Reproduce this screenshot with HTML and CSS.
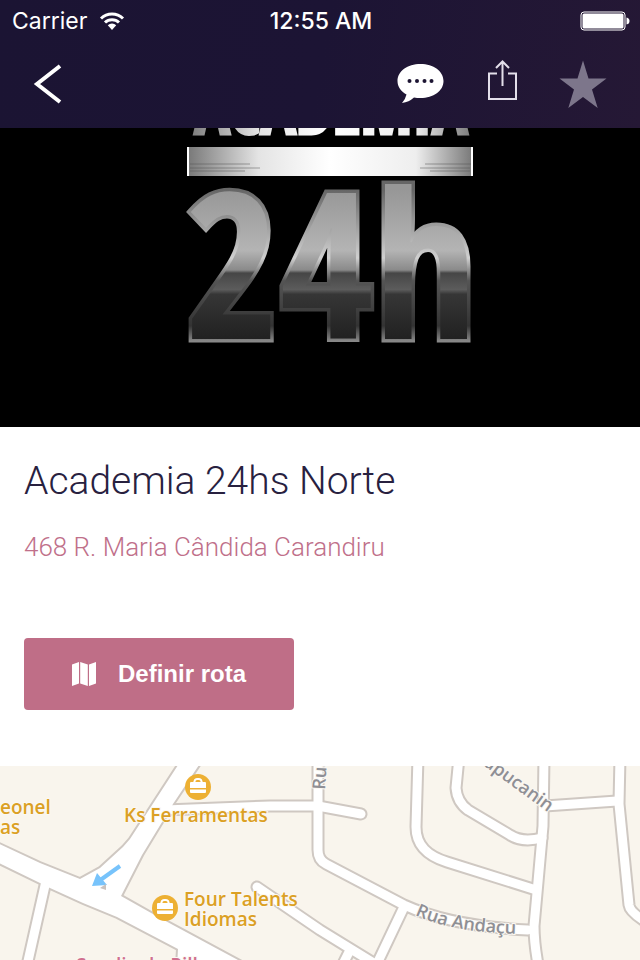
FILE: index.html
```
<!DOCTYPE html>
<html lang="pt-BR">
<head>
  <meta charset="UTF-8" />
  <meta name="viewport" content="width=device-width, initial-scale=1" />
  <title>Academia 24hs Norte</title>
  <link rel="stylesheet" href="styles.css">
</head>
<body>
  <header class="top">
    <!-- Status bar -->
    <div class="status-bar">
      <div class="carrier">
        <span>Carrier</span>
        <svg class="wifi" viewBox="0 0 26 20">
          <path d="M2 7.500A16 16 0 0 1 24 7.500" />
          <path d="M6 11.500A10 10 0 0 1 20 11.500" />
          <path class="wifi-dot" d="M8.800 14.300A6 6 0 0 1 17.200 14.300L13 19z" />
        </svg>
      </div>
      <time class="clock">12:55 AM</time>
      <svg class="battery" viewBox="0 0 50 20">
        <rect class="battery-frame" x="1" y="1" width="44" height="18" rx="3" />
        <rect x="2.500" y="2.500" width="41" height="15" rx="1.500" />
        <path d="M46.500 6.500q3 .5 3 3.500t-3 3.500z" />
      </svg>
    </div>

    <!-- Navigation -->
    <nav class="nav">
      <button class="icon-button back" aria-label="Voltar">
        <svg class="icon" viewBox="0 0 48 48">
          <path class="back-line" d="M36 6L13 24L36 42" />
        </svg>
      </button>
      <div class="actions">
        <button class="icon-button" aria-label="Comentários">
          <svg class="icon" viewBox="0 0 48 48">
            <path fill="#fff" d="M24.500 4C37.500 4 47.500 11 47.500 21S37.500 38 24.500 38Q21 38 18 37.500Q13 42 6 43Q9.500 39 10.500 34.500C4.500 31 1.500 26.500 1.500 21C1.500 11 11.500 4 24.500 4z" />
            <g fill="#1d1533">
              <circle cx="13.500" cy="21" r="2" />
              <circle cx="21" cy="21" r="2" />
              <circle cx="28.500" cy="21" r="2" />
              <circle cx="35.500" cy="21" r="2" />
            </g>
          </svg>
        </button>
        <button class="icon-button" aria-label="Compartilhar">
          <svg class="icon" viewBox="0 0 48 48">
            <path class="share-line" d="M20 13.500H12V39H39V13.500H31M25.500 26V2M19 8L25.500 1.500L32 8" />
          </svg>
        </button>
        <button class="icon-button" aria-label="Favoritar">
          <svg class="icon" viewBox="0 0 48 48">
            <path fill="#7d768b" d="M25 0.500L30.500 18.500H48.500L34 29.500L39.700 48L25 37L10.300 48L16 29.500L1.500 18.500H19.500z" />
          </svg>
        </button>
      </div>
    </nav>
  </header>

  <main>
    <div class="hero">
      <svg class="hero-logo" viewBox="0 0 640 299" role="img" aria-label="Academia 24h">
        <defs>
          <linearGradient id="metal" gradientUnits="userSpaceOnUse" x1="0" y1="62" x2="0" y2="213">
            <stop offset="0" stop-color="#979797" />
            <stop offset=".4" stop-color="#b4b4b4" />
            <stop offset=".53" stop-color="#8a8a8a" />
            <stop offset=".55" stop-color="#464646" />
            <stop offset=".66" stop-color="#5c5c5c" />
            <stop offset=".69" stop-color="#363636" />
            <stop offset="1" stop-color="#202020" />
          </linearGradient>
          <linearGradient id="edge" gradientUnits="userSpaceOnUse" x1="0" y1="62" x2="0" y2="213">
            <stop offset="0" stop-color="#666" />
            <stop offset=".45" stop-color="#d0d0d0" />
            <stop offset=".6" stop-color="#555" />
            <stop offset=".9" stop-color="#333" />
            <stop offset="1" stop-color="#888" />
          </linearGradient>
          <linearGradient id="chrome" gradientUnits="userSpaceOnUse" x1="187" y1="0" x2="473" y2="0">
            <stop offset="0" stop-color="#777" />
            <stop offset=".25" stop-color="#e4e4e4" />
            <stop offset=".5" stop-color="#fff" />
            <stop offset=".8" stop-color="#eee" />
            <stop offset="1" stop-color="#777" />
          </linearGradient>
        </defs>
        <text class="logo-name" x="331" y="6" fill="url(#chrome)" stroke="url(#chrome)">ACADEMIA</text>
        <rect x="187" y="19" width="286" height="29" fill="url(#chrome)" />
        <path stroke="#555" opacity=".5" d="M190 36h60M190 40h70M190 43h55M425 36h46M420 40h50M430 43h40" />
        <path stroke="#fff" stroke-width="2" d="M188 19v29M472 19v29" />
        <text class="logo-number" x="331" y="211" fill="url(#metal)" stroke="url(#edge)">24h</text>
      </svg>
    </div>

    <section class="info">
      <h1>Academia 24hs Norte</h1>
      <p class="address">468 R. Maria Cândida Carandiru</p>
      <button class="route-button">
        <svg class="map-icon" viewBox="0 0 24 24">
          <path d="M0 2.500L7 0V21.500L0 24zM8.200 0L15.800 2.500V24L8.200 21.500zM17 2.500L24 0V21.500L17 24z" />
        </svg>
        Definir rota
      </button>
    </section>

    <!-- Map -->
    <svg class="map" viewBox="0 0 640 194" role="img" aria-label="Mapa">
      <defs>
        <g id="roads">
          <path d="M46 115L26 204" />
          <path d="M165 44L270 40L318 40L361 48" />
          <path d="M318 -9V84Q318 94 326 98L404 139Q450 160 528 164" />
          <path d="M403 143L374 204" />
          <path d="M257 121L320 164L385 204M350 184L340 204" />
          <path d="M418 -9L416 61C416 80 428 90 447 96L533 123" />
          <path d="M459 -9L456 22Q457 36 468 44L510 69Q522 77 542 72" />
          <path d="M544 -9L543 60L537 127L534 160Q534 178 539 204" />
          <path d="M545 40L617 35" />
          <path d="M620 -9L619 38L629 139Q630 147 650 158" />
        </g>
        <path id="avenue" d="M-5 76L40 97L80 113L100 102L123 81L130 73L182 -7H203L173 38L142 89L121 130L160 152L251 201H177L178 183L117 151L83 137L50 122L40 117L-5 95z" />
        <g id="poi">
          <circle r="13" fill="#edb033" />
          <path fill="none" stroke="#fff" stroke-width="2" d="M-4 -4L-3 -7Q-2.500 -8 -1 -8H1Q2.500 -8 3 -7L4 -4" />
          <path fill="#fff" d="M-7 -5H7Q8 -5 8 -4V1H-8V-4Q-8 -5 -7 -5zM-8 2.500H8V5Q8 6 7 6H-7Q-8 6 -8 5z" />
        </g>
        <path id="street-andacu" d="M415 149Q455 168 530 168" />
        <path id="street-sapucaninha" d="M483 -1L560 55" />
      </defs>

      <use href="#roads" class="road-edge" />
      <use href="#avenue" class="avenue-edge" />
      <use href="#roads" class="road" />
      <use href="#avenue" class="avenue" />

      <path fill="none" stroke="#77c3fb" stroke-width="4" d="M120 100L99 115" />
      <path fill="#77c3fb" d="M92 120L97 107L107 119z" />
      <path fill="#c9c2be" d="M100 122L106 118V124z" />

      <text class="street" transform="translate(325 24) rotate(-86)">Rua</text>
      <text class="street"><textPath href="#street-andacu">Rua Andaçu</textPath></text>
      <text class="street"><textPath href="#street-sapucaninha">apucanin</textPath></text>

      <use href="#poi" x="198" y="21" />
      <use href="#poi" x="165" y="142" />
      <text class="place" x="0" y="48">eonel</text>
      <text class="place" x="0" y="68">as</text>
      <text class="place" x="124" y="56">Ks Ferramentas</text>
      <text class="place" x="184" y="140">Four Talents</text>
      <text class="place" x="184" y="160">Idiomas</text>
      <text class="place place-pink" x="76" y="206">Sandia de Pilk</text>
    </svg>
  </main>
</body>
</html>
```
FILE: styles.css
```
body {
  margin: 0;
  background: #fff;
  color: #28213f;
  font-family: Roboto, 'Liberation Sans', sans-serif;
}

.top {
  background: linear-gradient(100deg, #1b1433 0%, #1c1434 50%, #251835 100%);
  color: #fff;
}

.status-bar {
  display: grid;
  grid-template-columns: 1fr auto 1fr;
  align-items: center;
  height: 41px;
  padding: 0 10px 0 12px;
  font-family: Inter, sans-serif;
  font-size: 23px;
}

.carrier {
  display: flex;
  align-items: center;
  gap: 12px;
}

.clock {
  font-weight: 500;
}

.wifi {
  width: 26px;
  height: 20px;
  fill: none;
  stroke: #fff;
  stroke-width: 3;
}

.wifi .wifi-dot {
  fill: #fff;
  stroke: none;
}

.battery {
  justify-self: end;
  width: 50px;
  height: 20px;
  fill: #fff;
}

.battery-frame {
  fill: none;
  stroke: #fff;
}

.nav {
  display: flex;
  justify-content: space-between;
  align-items: flex-start;
  height: 87px;
  padding: 19px 34px 0 24px;
  box-sizing: border-box;
}

.actions {
  display: flex;
  gap: 33px;
}

.icon-button {
  padding: 0;
  border: none;
  background: none;
  cursor: pointer;
}

.icon {
  display: block;
  width: 48px;
  height: 48px;
  overflow: visible;
}

.back-line {
  fill: none;
  stroke: #fff;
  stroke-width: 4;
}

.share-line {
  fill: none;
  stroke: #e3dfea;
  stroke-width: 2;
}

.hero {
  background: #000;
}

.hero-logo {
  display: block;
  width: 100%;
}

.logo-name,
.logo-number {
  font-family: 'Open Sans Condensed', 'Liberation Sans', sans-serif;
  font-weight: 700;
  text-anchor: middle;
}

.logo-name {
  font-size: 66px;
  stroke-width: 3;
}

.logo-number {
  font-size: 204px;
  paint-order: stroke;
  stroke-width: 7;
}

.info {
  padding: 30px 24px 56px;
}

h1 {
  margin: 0;
  font-size: 39px;
  font-weight: 300;
  line-height: 48px;
}

.address {
  margin: 25px 0 74px;
  color: #c0708a;
  font-size: 26px;
  font-weight: 300;
  line-height: 34px;
}

.route-button {
  display: flex;
  align-items: center;
  gap: 22px;
  height: 72px;
  padding: 0 48px;
  border: none;
  border-radius: 4px;
  background: #bf6e87;
  color: #fff;
  font-family: 'Liberation Sans', sans-serif;
  font-size: 24px;
  font-weight: 700;
  cursor: pointer;
}

.map-icon {
  width: 24px;
  height: 24px;
  fill: #fff;
}

.map {
  display: block;
  width: 100%;
  background: #f9f5ed;
}

.road,
.road-edge {
  fill: none;
  stroke-linecap: round;
  stroke-linejoin: round;
}

.road-edge {
  stroke: #cfc8c2;
  stroke-width: 13;
}

.road {
  stroke: #fff;
  stroke-width: 9;
}

.avenue-edge {
  stroke: #cfc8c2;
  stroke-width: 4;
}

.avenue {
  fill: #fff;
}

.street,
.place {
  font-family: 'Open Sans', sans-serif;
  font-weight: 600;
  paint-order: stroke;
  stroke: #fbf8f2;
  stroke-width: 2;
}

.street {
  fill: #8f8f95;
  font-size: 18px;
}

.place {
  fill: #dba024;
  font-size: 19px;
}

.place-pink {
  fill: #d0708f;
}
```
